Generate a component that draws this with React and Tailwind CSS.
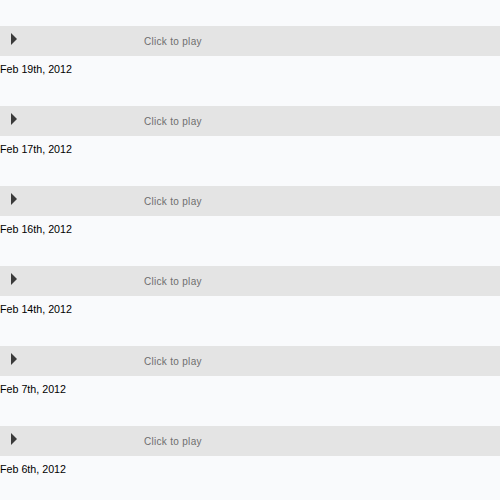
import React from 'react';

const dates = ['Feb 19th, 2012', 'Feb 17th, 2012', 'Feb 16th, 2012', 'Feb 14th, 2012', 'Feb 7th, 2012', 'Feb 6th, 2012'];

export default function App() {
    return (
        <div className="min-h-[500px] bg-[#f9fafc] pt-[26px] font-['Liberation_Sans',Arial,sans-serif]">
            {dates.map((d) => (
                <div key={d} className="h-[80px]">
                    {/* player bar */}
                    <div className="h-[30px] bg-[#e4e4e4] flex items-center">
                        <svg className="ml-[11px] -mt-[4px]" width="6" height="12" viewBox="0 0 6 12">
                            <polygon points="0,0 6,6 0,12" fill="#3a3a3a" />
                        </svg>
                        <span className="ml-[127px] text-[10px] tracking-[0.3px] text-[#6e6e6e]">Click to play</span>
                    </div>
                    <div className="pt-[7px] text-[10.7px] leading-[13px] text-black">{d}</div>
                </div>
            ))}
        </div>
    );
}
